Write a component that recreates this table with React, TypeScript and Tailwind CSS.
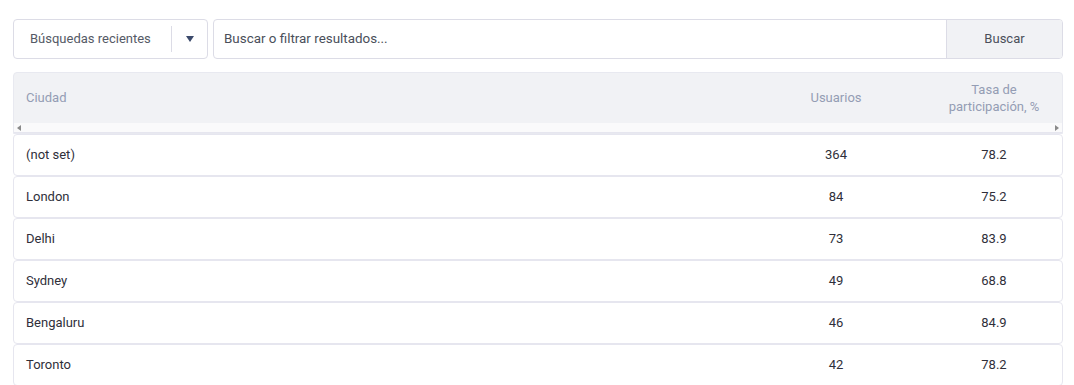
import React from "react";

const rows = [
  { city: "(not set)", users: "364", rate: "78.2" },
  { city: "London", users: "84", rate: "75.2" },
  { city: "Delhi", users: "73", rate: "83.9" },
  { city: "Sydney", users: "49", rate: "68.8" },
  { city: "Bengaluru", users: "46", rate: "84.9" },
  { city: "Toronto", users: "42", rate: "78.2" },
];

export default function App() {
  return (
    <div
      className="w-[1074px] h-[385px] bg-white overflow-hidden pt-[19px] pl-[13px] pr-[11px] text-[13px] text-[#2f2f3a]"
      style={{ fontFamily: "Roboto, 'Liberation Sans', sans-serif" }}
    >
      <div className="flex gap-[5px] h-[40px]">
        <div className="w-[195px] flex items-center border border-[#dcdce6] rounded-[4px] bg-white">
          <span className="flex-1 pl-[16px] text-[#555a66]">Búsquedas recientes</span>
          <div className="w-px h-[26px] bg-[#dcdce6]" />
          <div className="w-[35px] flex items-center justify-center">
            <svg width="8" height="6" viewBox="0 0 8 6">
              <path d="M0 0 L8 0 L4 6 Z" fill="#3b4a6b" />
            </svg>
          </div>
        </div>
        <div className="flex-1 flex border border-[#dcdce6] rounded-[4px] overflow-hidden">
          <div className="flex-1 flex items-center pl-[10px] text-[13.4px] text-[#4a4f5a]">Buscar o filtrar resultados...</div>
          <div className="w-[116px] border-l border-[#dcdce6] bg-[#f1f2f5] flex items-center justify-center text-[#4a4f5a]">
            Buscar
          </div>
        </div>
      </div>

      <div className="mt-[13px]">
        <div className="border border-[#e8e9f0] rounded-t-[4px] bg-[#f1f2f5]">
          <div className="grid grid-cols-[1fr_158px_136px] h-[50px] items-center text-[#949db4]">
            <div className="pl-[12px]">Ciudad</div>
            <div className="text-center pr-[22px]">Usuarios</div>
            <div className="text-center leading-[17px]">
              Tasa de
              <br />
              participación, %
            </div>
          </div>
          <div className="h-[10px] bg-[#fafafb] flex items-center justify-between px-[3px] border-b border-[#e6e6ef]">
            <svg width="4" height="6" viewBox="0 0 4 6">
              <path d="M4 0 L0 3 L4 6 Z" fill="#8a8a8a" />
            </svg>
            <svg width="4" height="6" viewBox="0 0 4 6">
              <path d="M0 0 L4 3 L0 6 Z" fill="#8a8a8a" />
            </svg>
          </div>
        </div>
        {rows.map((r) => (
          <div
            key={r.city}
            className="grid grid-cols-[1fr_158px_136px] h-[42px] items-center border border-[#e6e6ef] rounded-[4px] bg-white"
          >
            <div className="pl-[12px]">{r.city}</div>
            <div className="text-center pr-[22px]">{r.users}</div>
            <div className="text-center">{r.rate}</div>
          </div>
        ))}
      </div>
    </div>
  );
}
